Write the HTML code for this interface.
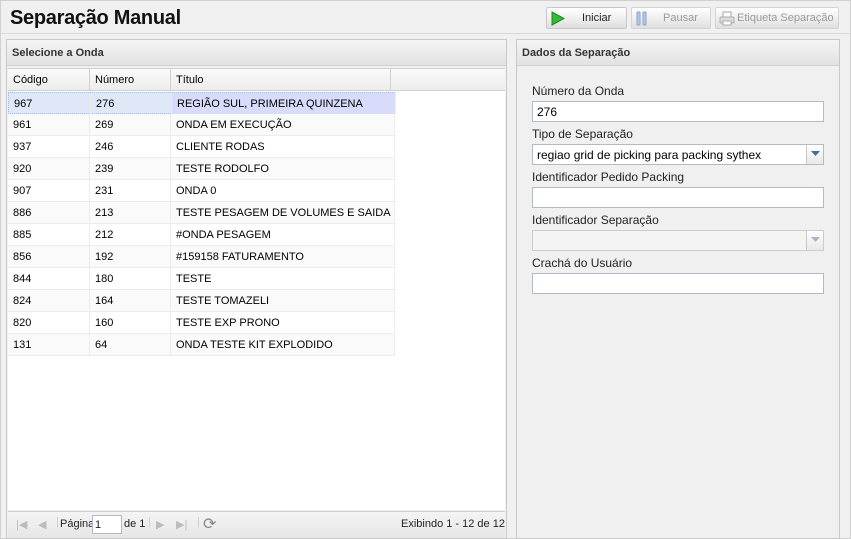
<!DOCTYPE html>
<html><head><meta charset="utf-8"><style>
*{margin:0;padding:0;box-sizing:border-box}
body{width:851px;height:539px;background:#f0f0f0;font-family:"Liberation Sans","DejaVu Sans",sans-serif;font-size:11px;color:#000;position:relative;overflow:hidden}
.a{position:absolute}
.title{left:10px;top:7px;font-size:20px;font-weight:bold;color:#111;letter-spacing:-0.3px}
.btn{top:7px;height:22px;border:1px solid #c8c8c8;border-radius:2px;background:linear-gradient(#fff,#ececec 60%,#dedede);font-size:11px;color:#222}
.btn span{position:absolute;top:4px}
.dis{color:#9a9a9a;border-color:#d4d4d4}
.panel{background:#f0f0f0;border:1px solid #c8c8c8}
.ph{left:0;right:0;top:0;height:26px;background:linear-gradient(#f4f4f4,#e2e2e2);border-bottom:1px solid #d0d0d0;font-weight:bold;font-size:11px;color:#333;padding:7px 0 0 5px}
.grid{left:1px;top:28px;width:497px;height:442px;background:#fff;border-top:1px solid #d0d0d0}
.gh{left:0;top:0;width:497px;height:22px;background:linear-gradient(#fafafa,#ececec);border-bottom:1px solid #d0d0d0}
.gh div{position:absolute;top:0;height:21px;border-right:1px solid #d0d0d0;padding:5px 0 0 5px}
.row{left:0;width:387px;height:22px;border-bottom:1px solid #ececec}
.row div{position:absolute;top:0;height:21px;padding:5px 0 0 5px;border-right:1px solid #ececec}
.ft{left:1px;top:471px;width:497px;height:27px;background:linear-gradient(#f4f4f4,#e6e6e6);border-top:1px solid #d0d0d0;color:#222}
.lbl{left:15px;font-size:12px;color:#222}
.inp{left:15px;width:292px;height:21px;background:#fff;border:1px solid #b5b8c8;font-size:12px;padding:3px 0 0 4px}
.trig{position:absolute;right:0;top:0;width:17px;height:19px;border-left:1px solid #c8c8c8;background:linear-gradient(#fff,#e8e8e8)}
</style></head><body>
<div class="a" style="left:0;top:0;width:851px;height:539px;border:1px solid #d0d0d0"></div>
<div class="a title">Separação Manual</div>
<div class="a btn" style="left:546px;width:81px"><svg class="a" style="left:4px;top:3px" width="14" height="15"><polygon points="1,1 13,7.5 1,14" fill="#33bb33" stroke="#1e8a1e"/></svg><span style="left:35px">Iniciar</span></div>
<div class="a btn dis" style="left:631px;width:80px"><svg class="a" style="left:4px;top:3px" width="12" height="15"><rect x="1" y="1" width="3" height="13" rx="1" fill="#b8c8e8" stroke="#8aa0cc"/><rect x="7" y="1" width="3" height="13" rx="1" fill="#b8c8e8" stroke="#8aa0cc"/></svg><span style="left:31px">Pausar</span></div>
<div class="a btn dis" style="left:715px;width:124px"><svg class="a" style="left:3px;top:3px" width="16" height="15"><rect x="4" y="1" width="8" height="5" fill="#fff" stroke="#aaa"/><rect x="1" y="6" width="14" height="6" rx="1" fill="#ddd" stroke="#aaa"/><rect x="4" y="10" width="8" height="4" fill="#fff" stroke="#aaa"/></svg><span style="left:21px">Etiqueta Separação</span></div>
<div class="a" style="left:0;top:33px;width:851px;height:1px;background:#d8d8d8"></div>

<div class="a panel" style="left:6px;top:39px;width:501px;height:500px">
<div class="a ph">Selecione a Onda</div>
<div class="a grid">
<div class="a gh"><div style="left:0;width:82px">Código</div><div style="left:82px;width:81px">Número</div><div style="left:163px;width:220px">Título</div></div>
<div class="a row" style="top:23px;background:#dfe8f6;border:1px dotted #a3bae9"><div style="left:0;width:82px">967</div><div style="left:82px;width:81px">276</div><div style="left:163px;width:224px;background:#d9dbfa">REGIÃO SUL, PRIMEIRA QUINZENA</div></div>
<div class="a row" style="top:45px;background:#fafafa"><div style="left:0;width:82px">961</div><div style="left:82px;width:81px">269</div><div style="left:163px;width:224px">ONDA EM EXECUÇÃO</div></div>
<div class="a row" style="top:67px"><div style="left:0;width:82px">937</div><div style="left:82px;width:81px">246</div><div style="left:163px;width:224px">CLIENTE RODAS</div></div>
<div class="a row" style="top:89px;background:#fafafa"><div style="left:0;width:82px">920</div><div style="left:82px;width:81px">239</div><div style="left:163px;width:224px">TESTE RODOLFO</div></div>
<div class="a row" style="top:111px"><div style="left:0;width:82px">907</div><div style="left:82px;width:81px">231</div><div style="left:163px;width:224px">ONDA 0</div></div>
<div class="a row" style="top:133px;background:#fafafa"><div style="left:0;width:82px">886</div><div style="left:82px;width:81px">213</div><div style="left:163px;width:224px">TESTE PESAGEM DE VOLUMES E SAIDA</div></div>
<div class="a row" style="top:155px"><div style="left:0;width:82px">885</div><div style="left:82px;width:81px">212</div><div style="left:163px;width:224px">#ONDA PESAGEM</div></div>
<div class="a row" style="top:177px;background:#fafafa"><div style="left:0;width:82px">856</div><div style="left:82px;width:81px">192</div><div style="left:163px;width:224px">#159158 FATURAMENTO</div></div>
<div class="a row" style="top:199px"><div style="left:0;width:82px">844</div><div style="left:82px;width:81px">180</div><div style="left:163px;width:224px">TESTE</div></div>
<div class="a row" style="top:221px;background:#fafafa"><div style="left:0;width:82px">824</div><div style="left:82px;width:81px">164</div><div style="left:163px;width:224px">TESTE TOMAZELI</div></div>
<div class="a row" style="top:243px"><div style="left:0;width:82px">820</div><div style="left:82px;width:81px">160</div><div style="left:163px;width:224px">TESTE EXP PRONO</div></div>
<div class="a row" style="top:265px;background:#fafafa"><div style="left:0;width:82px">131</div><div style="left:82px;width:81px">64</div><div style="left:163px;width:224px">ONDA TESTE KIT EXPLODIDO</div></div>
</div>
<div class="a ft">
<span class="a" style="left:8px;top:6px;color:#bbb">|◀</span>
<span class="a" style="left:30px;top:6px;color:#bbb">◀</span>
<span class="a" style="left:48px;top:4px;color:#ccc">|</span>
<span class="a" style="left:52px;top:6px">Página</span>
<div class="a" style="left:84px;top:3px;width:30px;height:19px;background:#fff;border:1px solid #b5b8c8;padding:3px 0 0 2px">1</div>
<span class="a" style="left:116px;top:6px">de 1</span>
<span class="a" style="left:140px;top:4px;color:#ccc">|</span>
<span class="a" style="left:148px;top:6px;color:#bbb">▶</span>
<span class="a" style="left:168px;top:6px;color:#bbb">▶|</span>
<span class="a" style="left:189px;top:4px;color:#ccc">|</span>
<span class="a" style="left:195px;top:2px;font-size:16px;color:#888">⟳</span>
<span class="a" style="left:393px;top:6px">Exibindo 1 - 12 de 12</span>
</div>
</div>

<div class="a panel" style="left:516px;top:39px;width:324px;height:500px">
<div class="a ph">Dados da Separação</div>
<div class="a lbl" style="top:44px">Número da Onda</div>
<div class="a inp" style="top:61px">276</div>
<div class="a lbl" style="top:87px">Tipo de Separação</div>
<div class="a inp" style="top:104px">regiao grid de picking para packing sythex<div class="trig"><svg class="a" style="left:4px;top:6px" width="9" height="6"><polygon points="0,0 9,0 4.5,5" fill="#4a6a9a"/></svg></div></div>
<div class="a lbl" style="top:130px">Identificador Pedido Packing</div>
<div class="a inp" style="top:147px"></div>
<div class="a lbl" style="top:173px">Identificador Separação</div>
<div class="a inp" style="top:190px;background:#f4f4f4;border-color:#ccc"><div class="trig"><svg class="a" style="left:4px;top:6px" width="9" height="6"><polygon points="0,0 9,0 4.5,5" fill="#a8b4c8"/></svg></div></div>
<div class="a lbl" style="top:216px">Crachá do Usuário</div>
<div class="a inp" style="top:233px"></div>
</div>
</body></html>
